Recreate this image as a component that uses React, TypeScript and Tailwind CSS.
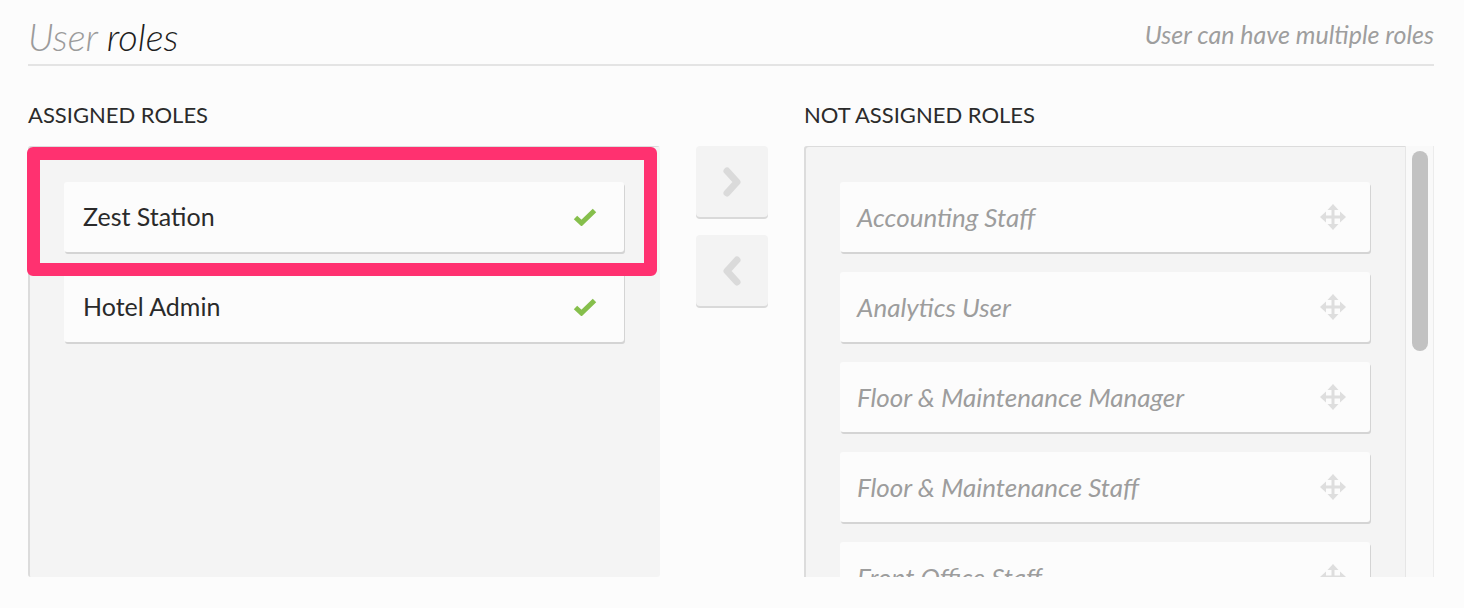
import React from "react";

const font = { fontFamily: "Lato, 'Open Sans', sans-serif" };

function Check() {
  return (
    <svg width="24" height="18" viewBox="0 0 24 18" className="shrink-0">
      <path d="M2.5 9.5 L8.5 15 L21.5 2.5" fill="none" stroke="#86bf4c" strokeWidth="5" strokeLinejoin="miter" />
    </svg>
  );
}

function Move() {
  return (
    <svg width="28" height="28" viewBox="0 0 28 28" className="shrink-0">
      <g fill="#dedede">
        <rect x="6" y="12.5" width="16" height="3" />
        <rect x="12.5" y="6" width="3" height="16" />
        <polygon points="14,1 8.5,7 19.5,7" />
        <polygon points="14,27 8.5,21 19.5,21" />
        <polygon points="1,14 7,8.5 7,19.5" />
        <polygon points="27,14 21,8.5 21,19.5" />
      </g>
    </svg>
  );
}

function Chevron({ dir }: { dir: "right" | "left" }) {
  return (
    <svg width="22" height="32" viewBox="0 0 22 32">
      <path
        d={dir === "right" ? "M6 5 L16 16 L6 27" : "M16 5 L6 16 L16 27"}
        fill="none"
        stroke="#dadada"
        strokeWidth="7"
        strokeLinecap="round"
        strokeLinejoin="round"
      />
    </svg>
  );
}

const assigned = ["Zest Station", "Hotel Admin"];
const notAssigned = [
  "Accounting Staff",
  "Analytics User",
  "Floor & Maintenance Manager",
  "Floor & Maintenance Staff",
  "Front Office Staff",
  "General Manager",
];

export default function App() {
  return (
    <div className="w-[1464px] h-[608px] bg-[#fcfcfc] overflow-hidden" style={font}>
      <div className="pl-[28px] pr-[30px]">
        <div className="flex items-end justify-between h-[66px] pb-[9px] border-b-2 border-[#e4e4e4]">
          <h1 className="text-[38px] leading-none italic font-light">
            <span className="text-[#9b9b9b]">User</span> <span className="text-[#1e1e1e]">roles</span>
          </h1>
          <div className="text-[25px] italic text-[#9e9e9e] leading-none pb-[8px]">User can have multiple roles</div>
        </div>

        <div className="flex gap-[36px] mt-[36px]">
          {/* Assigned */}
          <div className="w-[632px] shrink-0">
            <div className="text-[22px] text-[#2b2b2b] leading-[26px] h-[44px] uppercase">Assigned roles</div>
            <div className="relative h-[431px] bg-[#f4f4f4] rounded-[3px] shadow-[inset_2px_1px_0_#dcdcdc]">
              <div className="flex flex-col gap-[20px] pt-[36px] pl-[36px] pr-[36px]">
                {assigned.map((r) => (
                  <div
                    key={r}
                    className="h-[70px] bg-[#fcfcfc] rounded-[3px] shadow-[1px_2px_0_#d4d4d4] flex items-center justify-between pl-[19px] pr-[27px]"
                  >
                    <span className="text-[25px] text-[#2a2a2a]">{r}</span>
                    <Check />
                  </div>
                ))}
              </div>
              <div className="absolute left-[-1px] top-[1px] w-[630px] h-[129px] border-[13px] border-[#ff3170] rounded-[6px]" />
            </div>
          </div>

          {/* Buttons */}
          <div className="w-[72px] shrink-0 pt-[44px] flex flex-col gap-[18px]">
            <div className="h-[71px] bg-[#f3f3f3] rounded-[4px] shadow-[0_2px_0_#d9d9d9] flex items-center justify-center">
              <Chevron dir="right" />
            </div>
            <div className="h-[71px] bg-[#f3f3f3] rounded-[4px] shadow-[0_2px_0_#d9d9d9] flex items-center justify-center">
              <Chevron dir="left" />
            </div>
          </div>

          {/* Not assigned */}
          <div className="flex-1">
            <div className="text-[22px] text-[#2b2b2b] leading-[26px] h-[44px] uppercase">Not assigned roles</div>
            <div className="h-[431px] flex overflow-hidden">
              <div className="flex-1 bg-[#f4f4f4] rounded-tl-[3px] shadow-[inset_2px_1px_0_#dcdcdc] border-r border-[#e6e6e6] overflow-hidden">
                <div className="flex flex-col gap-[20px] pt-[36px] pl-[36px] pr-[35px]">
                  {notAssigned.map((r) => (
                    <div
                      key={r}
                      className="h-[70px] shrink-0 bg-[#fcfcfc] rounded-[3px] shadow-[1px_2px_0_#d4d4d4] flex items-center justify-between pl-[17px] pr-[23px]"
                    >
                      <span className="text-[26px] italic text-[#9d9d9d]">{r}</span>
                      <Move />
                    </div>
                  ))}
                </div>
              </div>
              <div className="w-[28px] shrink-0 bg-[#f9f9f9] border-r border-[#ececec] pt-[5px] flex justify-center">
                <div className="w-[16px] h-[200px] rounded-full bg-[#c2c2c2]" />
              </div>
            </div>
          </div>
        </div>
      </div>
    </div>
  );
}
